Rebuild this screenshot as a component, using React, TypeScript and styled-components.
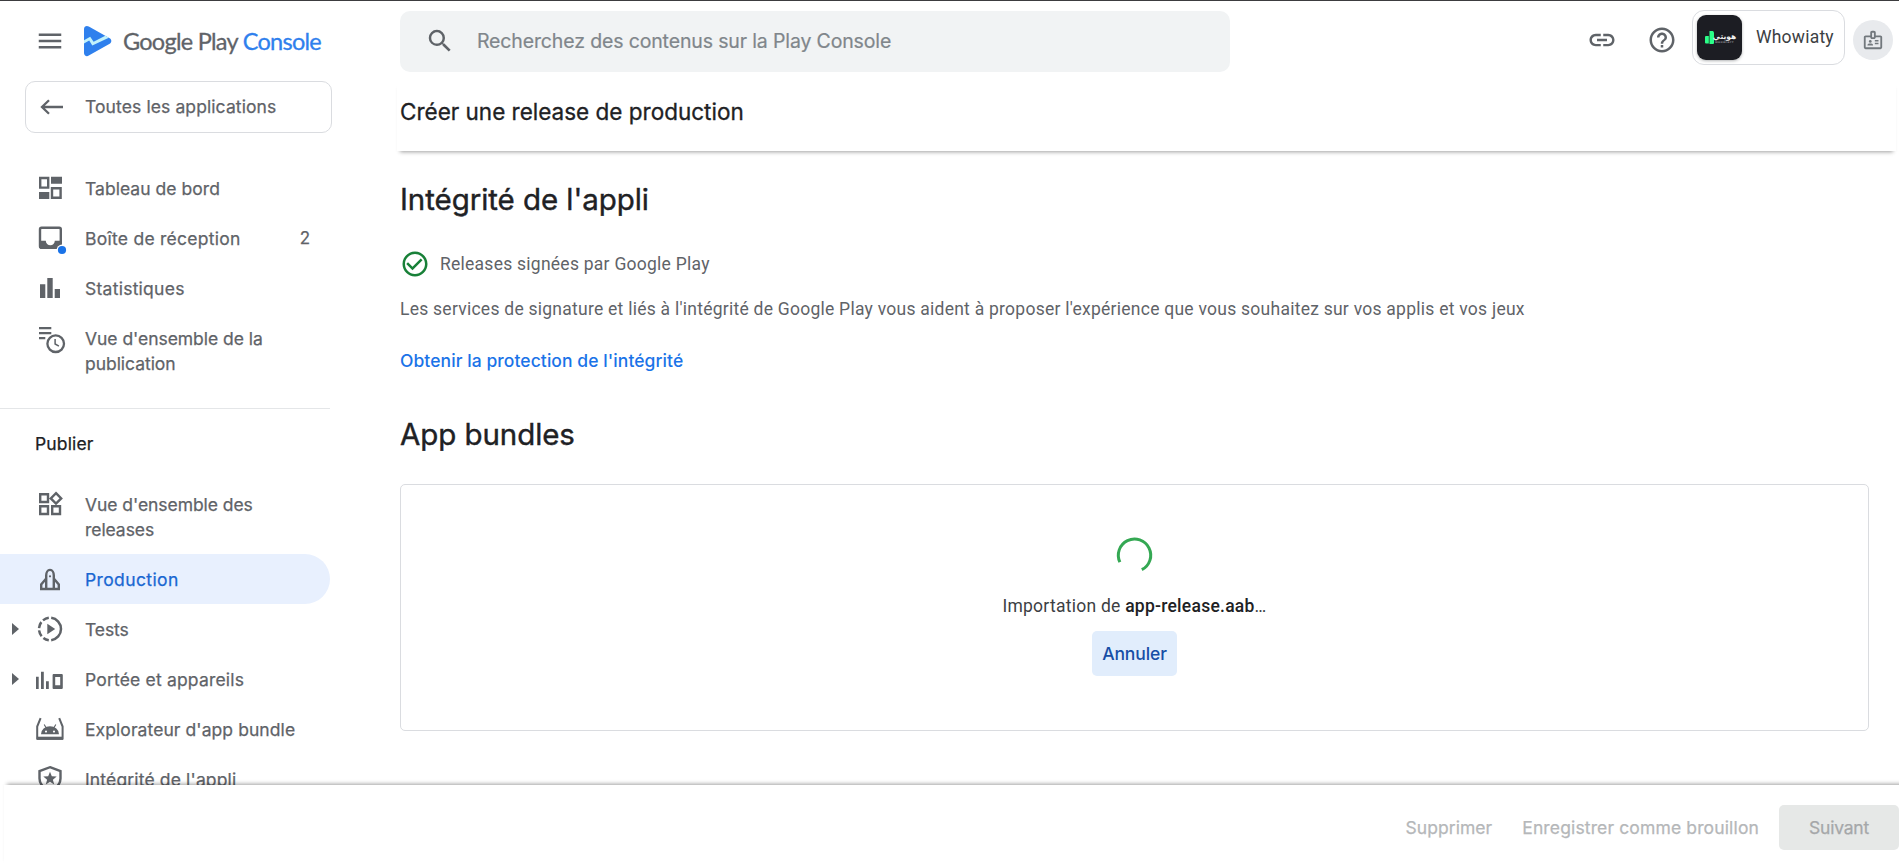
import React from "react";
import styled, { createGlobalStyle } from "styled-components";
import {
  MdMenu,
  MdSearch,
  MdLink,
  MdHelpOutline,
  MdOutlineBadge,
  MdCheckCircleOutline,
} from "react-icons/md";

const GlobalStyle = createGlobalStyle`
  *, *::before, *::after { box-sizing: border-box; }
  body {
    margin: 0;
    background: #fff;
    color: #5f6368;
    font-family: Inter, "Liberation Sans", sans-serif;
    font-size: 17.5px;
    overflow: hidden;
  }
  svg { display: block; flex: none; }
  h1, h2, p { margin: 0; font-weight: 400; }
  button { font: inherit; border: 0; margin: 0; }
`;

const Page = styled.div`
  display: flex;
  flex-direction: column;
  height: 868px;
  border-top: 1px solid #3c3c3f;
  overflow: hidden;
`;

const Columns = styled.div`
  display: flex;
  height: 784px;
  overflow: hidden;
`;

const Sidebar = styled.aside`
  flex: none;
  width: 400px;
  -webkit-text-stroke: 0.25px currentColor;
`;

const Brand = styled.div`
  display: flex;
  align-items: center;
  height: 80px;
  padding-left: 35px;
`;

const BrandMark = styled.svg`
  margin-left: 18px;
`;

const BrandName = styled.div`
  display: flex;
  gap: 5px;
  margin: 0 0 0 11px;
  font-family: Lato, sans-serif;
  font-size: 23.5px;
  line-height: 30px;
  letter-spacing: -0.74px;
  white-space: nowrap;
  -webkit-text-stroke: 0.3px currentColor;
`;

const BrandAccent = styled.span`
  color: #2f80ed;
`;

const BackButton = styled.a`
  display: flex;
  align-items: center;
  width: 307px;
  height: 52px;
  margin-left: 25px;
  padding-left: 14px;
  border: 1px solid #dadce0;
  border-radius: 10px;
`;

const BackLabel = styled.span`
  margin: -1px 0 0 21px;
  letter-spacing: 0.1px;
`;

const NavList = styled.nav<{ $first?: boolean }>`
  width: 330px;
  padding: ${(p) => (p.$first ? "30px 0 20px" : "0")};
  border-bottom: ${(p) => (p.$first ? "1px solid #e4e6e8" : "0")};
`;

const NavHeading = styled.div`
  width: 330px;
  height: 70px;
  padding-left: 35px;
  line-height: 70px;
  color: #202124;
  letter-spacing: 0.15px;
`;

const NavItem = styled.a<{ $active?: boolean }>`
  display: flex;
  align-items: flex-start;
  padding: 10px 20px 0 0;
  min-height: 50px;
  border-radius: 0 25px 25px 0;
  background: ${(p) => (p.$active ? "#e8f0fe" : "transparent")};
  color: ${(p) => (p.$active ? "#1967d2" : "#5f6368")};
`;

const NavGutter = styled.span`
  display: flex;
  flex: none;
  align-items: center;
  width: 35px;
  height: 30px;
  padding-left: 12px;
`;

const NavIcon = styled.svg`
  overflow: visible;
  color: #5f6368;
`;

const NavLabel = styled.span<{ $ls: number }>`
  flex: 1;
  margin-left: 20px;
  padding: 2.5px 0 12.5px;
  line-height: 25px;
  white-space: pre-line;
  letter-spacing: ${(p) => p.$ls}px;
`;

const NavCount = styled.span`
  padding-top: 3px;
  line-height: 25px;
  font-size: 17px;
`;

const Main = styled.main`
  flex: 1;
  min-width: 0;
`;

const TopBar = styled.header`
  display: flex;
  align-items: flex-start;
  height: 80px;
`;

const SearchBox = styled.div`
  display: flex;
  align-items: center;
  width: 830px;
  height: 61px;
  margin-top: 10px;
  padding: 0 0 2px 25px;
  border-radius: 10px;
  background: #f1f3f4;
`;

const SearchHint = styled.span`
  margin-left: 22px;
  color: #80868b;
  font-size: 19.5px;
  letter-spacing: -0.14px;
  -webkit-text-stroke: 0.2px currentColor;
`;

const TopActions = styled.div`
  display: flex;
  align-items: center;
  height: 78px;
  margin-left: auto;
  padding-right: 6px;
`;

const HelpButton = styled.span`
  margin: 0 15px 0 30px;
`;

const AccountChip = styled.div`
  display: flex;
  align-items: center;
  width: 153px;
  height: 55px;
  margin-top: -5px;
  padding-left: 4px;
  border: 1px solid #dadce0;
  border-radius: 12px;
  color: #3c4043;
  font-family: Roboto, sans-serif;
`;

const AppTile = styled.span`
  display: flex;
  align-items: center;
  justify-content: center;
  gap: 1px;
  width: 45px;
  height: 45px;
  margin-right: 14px;
  border-radius: 9px;
  background: #1c1d23;
  box-shadow: 0 1px 3px rgba(60, 64, 67, 0.4);
`;

const TileWords = styled.span`
  display: flex;
  flex-direction: column;
  align-items: center;
  width: 19px;
  color: #f2f2f2;
  font-family: "DejaVu Sans", sans-serif;
  font-weight: 700;
  font-size: 7.5px;
  line-height: 9px;
  white-space: nowrap;
`;

const TileTagline = styled.span`
  color: #8a8b90;
  font-size: 2.5px;
  line-height: 3px;
  letter-spacing: 0.4px;
`;

const AccountName = styled.span`
  margin-top: -2px;
  letter-spacing: 0.22px;
`;

const Avatar = styled.span`
  display: flex;
  align-items: center;
  justify-content: center;
  width: 40px;
  height: 40px;
  margin-left: 8px;
  margin-top: -1px;
  border-radius: 50%;
  background: #e8eaed;
  color: #72787d;
`;

const TitleBar = styled.div`
  height: 70px;
  margin: 0 3px 0 -3px;
  padding: 15px 0 0 3px;
  box-shadow: 0 4px 4px -3px rgba(0, 0, 0, 0.38);
`;

const PageTitle = styled.h1`
  font-size: 22.5px;
  line-height: 31px;
  color: #202124;
  -webkit-text-stroke: 0.3px currentColor;
`;

const Content = styled.section`
  padding: 28px 30px 0 0;
`;

const SectionTitle = styled.h2<{ $ls: number }>`
  font-size: 29.5px;
  line-height: 40px;
  color: #202124;
  letter-spacing: ${(p) => p.$ls}px;
  -webkit-text-stroke: 0.4px currentColor;
`;

const StatusRow = styled.div`
  display: flex;
  align-items: center;
  gap: 10px;
  height: 30px;
  margin-top: 30px;
  font-family: Roboto, sans-serif;
  letter-spacing: 0.25px;
  color: #5f6368;
`;

const Description = styled.p`
  margin-top: 18px;
  line-height: 24px;
  font-family: Roboto, sans-serif;
  letter-spacing: 0.25px;
`;

const ProtectionLink = styled.a`
  display: block;
  margin: 28px 0 41px;
  line-height: 24px;
  font-weight: 500;
  letter-spacing: 0.07px;
  color: #1a73e8;
`;

const UploadCard = styled.div`
  display: flex;
  flex-direction: column;
  align-items: center;
  height: 247px;
  margin-top: 30px;
  padding-top: 50px;
  border: 1px solid #dadce0;
  border-radius: 5px;
`;

const UploadText = styled.p`
  margin-top: 19px;
  line-height: 24px;
  font-family: Roboto, sans-serif;
  letter-spacing: 0.25px;
  color: #3c4043;
`;

const FileName = styled.span`
  font-weight: 500;
  color: #202124;
`;

const CancelButton = styled.button`
  width: 85px;
  height: 45px;
  margin-top: 13px;
  padding: 0;
  border-radius: 5px;
  background: #e1edfc;
  color: #174ea6;
  font-weight: 500;
  letter-spacing: -0.1px;
`;

const Footer = styled.footer`
  display: flex;
  flex: none;
  justify-content: flex-end;
  align-items: center;
  height: 83px;
  margin: 0 -8px 0 4px;
  padding: 1px 8px 0 0;
  position: relative;
  background: #fff;
  box-shadow: 0 -4px 4px -3px rgba(0, 0, 0, 0.38);
`;

const FooterButton = styled.button<{ $filled?: boolean; $ls?: number }>`
  width: ${(p) => (p.$filled ? "120px" : "auto")};
  height: 45px;
  margin-left: ${(p) => (p.$filled ? "20px" : "30px")};
  padding: 0;
  border-radius: 5px;
  background: ${(p) => (p.$filled ? "#e6e8e7" : "transparent")};
  color: ${(p) => (p.$filled ? "#a5a7a9" : "#b5b7b9")};
  letter-spacing: ${(p) => p.$ls ?? 0}px;
  -webkit-text-stroke: 0.25px currentColor;
`;

const outline = { fill: "none", stroke: "currentColor", strokeWidth: 2.4 };

const icons: Record<string, React.ReactNode> = {
  dashboard: (
    <>
      <path d="M5.2 5h8v9.6h-8zM17 15.2h8.6v9.6H17z" {...outline} />
      <path d="M16 3.7h11v7H16zM4 19h10.3v7H4z" fill="currentColor" />
    </>
  ),
  inbox: (
    <>
      <rect x="5" y="4.8" width="20.8" height="20" rx="1.6" {...outline} />
      <path d="M4.5 17.8h6.3a4.5 4.5 0 0 0 9 0h6.2V25H4.5z" fill="currentColor" />
      <circle cx="27" cy="27" r="5.4" fill="#fff" />
      <circle cx="27" cy="27" r="4.1" fill="#1a73e8" />
    </>
  ),
  stats: (
    <path d="M5 11.3h5.3V25H5zM12.3 5h5.4v20h-5.4zM19.7 16H25v9h-5.3z" fill="currentColor" />
  ),
  publishing: (
    <>
      <path d="M4 5.1h12.3M4 10.1h12.3M4 15.1h6.3" {...outline} strokeWidth={2.2} />
      <circle cx="20.7" cy="20.7" r="8.3" {...outline} strokeWidth={2.3} />
      <path d="M20.1 16v5l3.8 2.2" {...outline} strokeWidth={1.5} />
    </>
  ),
  releases: (
    <path
      d="M5.2 5.2h7.8v7.8H5.2zM5.2 17.2h7.8V25H5.2zM17.2 17.2H25V25h-7.8zM21 4.2l5.2 5.2-5.2 5.2-5.2-5.2z"
      {...outline}
    />
  ),
  rocket: (
    <>
      <path d="M11.2 25V11.5c0-3 1.5-5.6 3.8-5.6s3.8 2.6 3.8 5.6V25" {...outline} />
      <path d="M10.8 15l-4.6 5.4V25h17.6v-4.6L19.2 15" {...outline} />
      <circle cx="15" cy="12.3" r="1.1" fill="currentColor" />
    </>
  ),
  tests: (
    <>
      <path d="M16.2 3.8a11.3 11.3 0 0 1 0 22.4" {...outline} strokeWidth={2.5} />
      <path
        d="M13.8 3.8A11.3 11.3 0 0 0 13.8 26.2"
        {...outline}
        strokeWidth={2.5}
        strokeDasharray="6.4 2.4"
      />
      <path d="M12.3 9.8l7.9 5.2-7.9 5.2z" fill="currentColor" />
    </>
  ),
  reach: (
    <>
      <path d="M1 12.7h2.7V25H1zM6 7.7h2.8V25H6zM11 17.3h2.8V25H11z" fill="currentColor" />
      <path
        d="M18.5 10h8.4c.5 0 .9.4.9.9v13.2c0 .5-.4.9-.9.9h-8.4a.9.9 0 0 1-.9-.9V10.9c0-.5.4-.9.9-.9zm1.7 3v8.3h5V13z"
        fillRule="evenodd"
        fill="currentColor"
      />
    </>
  ),
  bundle: (
    <>
      <path d="M5.6 4.2L2.2 12.5V24.5H27.600V12.5L24.2 4.2" {...outline} strokeWidth={2} />
      <path d="M1.8 22.7h26.2v3.2H1.8z" fill="currentColor" />
      <path
        d="M6 20.2a9 8 0 0 1 18 0zM11 16.4a1 1 0 1 0 .01 0zM19 16.4a1 1 0 1 0 .01 0z"
        fillRule="evenodd"
        fill="currentColor"
      />
      <path d="M9.2 10.4l2 3.6M20.8 10.4l-2 3.6" {...outline} strokeWidth={1.1} />
    </>
  ),
  shield: (
    <>
      <path
        d="M15 3.2L25.5 7v7.5c0 5.5-4.500 10.500-10.500 12.300C9 25 4.500 20 4.500 14.500V7z"
        {...outline}
      />
      <path
        d="M15 7.8l1.8 4.5 4.9.3-3.8 3.1 1.3 4.7-4.2-2.6-4.2 2.6 1.3-4.7-3.8-3.1 4.9-.3z"
        fill="currentColor"
      />
    </>
  ),
};

interface Entry {
  icon: string;
  label: string;
  ls: number;
  count?: number;
  active?: boolean;
  expandable?: boolean;
}

const overview: Entry[] = [
  { icon: "dashboard", label: "Tableau de bord", ls: 0.04 },
  { icon: "inbox", label: "Boîte de réception", ls: 0.26, count: 2 },
  { icon: "stats", label: "Statistiques", ls: 0.26 },
  { icon: "publishing", label: "Vue d'ensemble de la\npublication", ls: -0.04 },
];

const publish: Entry[] = [
  { icon: "releases", label: "Vue d'ensemble des\nreleases", ls: -0.06 },
  { icon: "rocket", label: "Production", ls: 0.38, active: true },
  { icon: "tests", label: "Tests", ls: -0.1, expandable: true },
  { icon: "reach", label: "Portée et appareils", ls: 0.18, expandable: true },
  { icon: "bundle", label: "Explorateur d'app bundle", ls: 0.08 },
  { icon: "shield", label: "Intégrité de l'appli", ls: 0.15 },
];

function NavEntry({ icon, label, ls, count, active, expandable }: Entry) {
  return (
    <NavItem $active={active}>
      <NavGutter>
        {expandable && (
          <svg width="7" height="12" viewBox="0 0 7 12">
            <path d="M0 0l7 6-7 6z" fill="#5f6368" />
          </svg>
        )}
      </NavGutter>
      <NavIcon width="30" height="30" viewBox="0 0 30 30">
        {icons[icon]}
      </NavIcon>
      <NavLabel $ls={ls}>{label}</NavLabel>
      {count !== undefined && <NavCount>{count}</NavCount>}
    </NavItem>
  );
}

export default function App() {
  return (
    <>
      <GlobalStyle />
      <Page>
        <Columns>
          <Sidebar>
            <Brand>
              <MdMenu size={30} color="#5f6368" />
              <BrandMark width="29" height="32" viewBox="0 0 29 32">
                <path
                  d="M1 4.2C1 1.3 3.6.2 5.8 1.5L26.7 13.2c2.2 1.3 2.2 4.2 0 5.5L5.8 30.6C3.6 31.9 1 30.7 1 28z"
                  fill="#2f80ed"
                />
                <path
                  d="M1 15.2L7.2 11.8 10.6 16.8 22.3 10.7 25.8 12.7 9.3 20.6 6.2 15.6 1 18.4z"
                  fill="#c3f3fb"
                />
              </BrandMark>
              <BrandName>
                <span>Google Play</span>
                <BrandAccent>Console</BrandAccent>
              </BrandName>
            </Brand>
            <BackButton>
              <svg width="24" height="16" viewBox="0 0 24 16">
                <path d="M23 8H2M9 1.200L2 8l7 6.800" fill="none" stroke="#5f6368" strokeWidth="2.300" />
              </svg>
              <BackLabel>Toutes les applications</BackLabel>
            </BackButton>
            <NavList $first>
              {overview.map((e) => (
                <NavEntry key={e.label} {...e} />
              ))}
            </NavList>
            <NavHeading>Publier</NavHeading>
            <NavList>
              {publish.map((e) => (
                <NavEntry key={e.label} {...e} />
              ))}
            </NavList>
          </Sidebar>
          <Main>
            <TopBar>
              <SearchBox>
                <MdSearch size={30} color="#5f6368" />
                <SearchHint>Recherchez des contenus sur la Play Console</SearchHint>
              </SearchBox>
              <TopActions>
                <MdLink size={30} color="#5f6368" />
                <HelpButton>
                  <MdHelpOutline size={30} color="#5f6368" />
                </HelpButton>
                <AccountChip>
                  <AppTile>
                    <svg width="9" height="13" viewBox="0 0 9 13">
                      <path d="M0 6q0-1 1-1h2.800v7.500H1q-1 0-1-1zM4.500 0H8q1 1 1 2v10q0 1-1 1H4.500z" fill="#2bff88" />
                    </svg>
                    <TileWords>
                      هويتي
                      <TileTagline>WHOWIATY</TileTagline>
                    </TileWords>
                  </AppTile>
                  <AccountName>Whowiaty</AccountName>
                </AccountChip>
                <Avatar>
                  <MdOutlineBadge size={22} />
                </Avatar>
              </TopActions>
            </TopBar>
            <TitleBar>
              <PageTitle>Créer une release de production</PageTitle>
            </TitleBar>
            <Content>
              <SectionTitle $ls={-0.06}>Intégrité de l'appli</SectionTitle>
              <StatusRow>
                <MdCheckCircleOutline size={30} color="#188038" />
                <span>Releases signées par Google Play</span>
              </StatusRow>
              <Description>
                Les services de signature et liés à l'intégrité de Google Play vous aident à proposer
                l'expérience que vous souhaitez sur vos applis et vos jeux
              </Description>
              <ProtectionLink>Obtenir la protection de l'intégrité</ProtectionLink>
              <SectionTitle $ls={-0.08}>App bundles</SectionTitle>
              <UploadCard>
                <svg width="40" height="40" viewBox="0 0 40 40">
                  <path
                    d="M4.900 27.200A16.200 16.200 0 1 1 26.800 34.700"
                    fill="none"
                    stroke="#34a853"
                    strokeWidth="3"
                  />
                </svg>
                <UploadText>
                  Importation de <FileName>app-release.aab</FileName>…
                </UploadText>
                <CancelButton>Annuler</CancelButton>
              </UploadCard>
            </Content>
          </Main>
        </Columns>
        <Footer>
          <FooterButton $ls={0.05}>Supprimer</FooterButton>
          <FooterButton $ls={0.14}>Enregistrer comme brouillon</FooterButton>
          <FooterButton $filled $ls={-0.2}>Suivant</FooterButton>
        </Footer>
      </Page>
    </>
  );
}
